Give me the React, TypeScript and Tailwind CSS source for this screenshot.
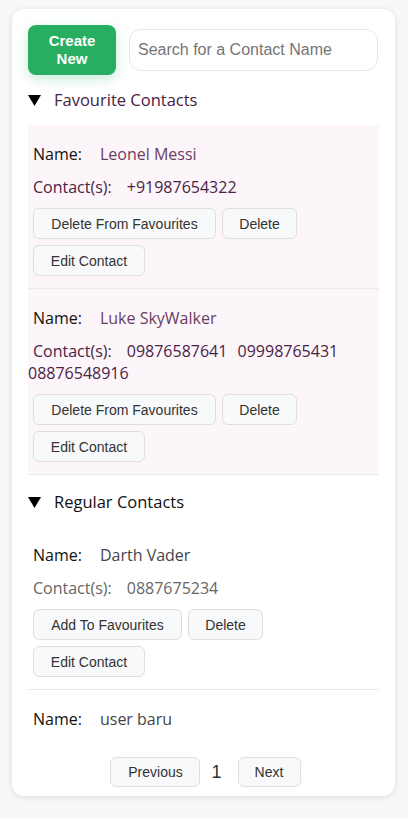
import React from "react";

type Contact = { name: string; numbers: string[] };

const favourites: Contact[] = [
  { name: "Leonel Messi", numbers: ["+91987654322"] },
  { name: "Luke SkyWalker", numbers: ["09876587641", "09998765431", "08876548916"] },
];

const regulars: Contact[] = [
  { name: "Darth Vader", numbers: ["0887675234"] },
  { name: "user baru", numbers: ["0123456789"] },
];

const btn =
  "rounded-md border border-[#dedede] bg-[#f8f9fa] text-[14px] leading-none text-[#333] font-['Liberation_Sans',Arial,sans-serif]";

function Triangle() {
  return (
    <svg width="13" height="11" viewBox="0 0 13 11" className="shrink-0">
      <polygon points="0,0 13,0 6.5,11" fill="#000" />
    </svg>
  );
}

function ContactItem({ c, fav }: { c: Contact; fav: boolean }) {
  return (
    <div
      className={`pt-[18px] pb-[12px] border-b border-[#ece8ea] ${fav ? "bg-[#fcf5f9]" : "bg-white"}`}
    >
      <p className="text-[16px] leading-[22px]">
        <span className="ml-[5px] mr-[18px] text-[#111]">Name:</span>
        <span className={fav ? "text-[#6b3d61]" : "text-[#44444c]"}>{c.name}</span>
      </p>
      <p
        className={`mt-[11px] text-[16px] leading-[22px] ${fav ? "text-[#4a2345]" : "text-[#666]"}`}
      >
        <span className="ml-[5px] mr-[15px]">Contact(s):</span>
        {c.numbers.map((n) => (
          <React.Fragment key={n}>
            <span className="mr-[6px]">{n}</span>{" "}
          </React.Fragment>
        ))}
      </p>
      <div className="mt-[10px] flex flex-wrap gap-[6px] pl-[5px] w-[290px]">
        {fav ? (
          <button className={`${btn} h-[31px] w-[183px]`}>Delete From Favourites</button>
        ) : (
          <button className={`${btn} h-[31px] w-[149px]`}>Add To Favourites</button>
        )}
        <button className={`${btn} h-[31px] w-[75px]`}>Delete</button>
        <button className={`${btn} h-[31px] w-[112px]`}>Edit Contact</button>
      </div>
    </div>
  );
}

export default function App() {
  return (
    <div className="min-h-screen bg-[#f8f8f8] pt-[9px] pl-[12px] font-['Open_Sans',sans-serif]">
      <div className="w-[383px] h-[787px] rounded-xl bg-white shadow-[0_1px_6px_rgba(0,0,0,0.12)] px-[16px] pt-[16px] flex flex-col">
        <div className="flex items-center gap-[13px]">
          <button className="w-[88px] h-[50px] rounded-lg bg-[#27ae60] text-white font-bold text-[15px] leading-[18px] font-['Liberation_Sans',Arial,sans-serif] shadow-[0_4px_12px_rgba(39,174,96,0.25)]">
            Create
            <br />
            New
          </button>
          <input
            className="w-[249px] h-[42px] rounded-xl border border-[#e7e8d8] pl-[8px] text-[16px] font-['Liberation_Sans',Arial,sans-serif] placeholder:text-[#757575] outline-none"
            placeholder="Search for a Contact Name"
          />
        </div>

        <div className="mt-[12px] h-[659px] shrink-0 overflow-hidden">
          <div className="flex items-center gap-[13px] h-[26px]">
            <Triangle />
            <span className="text-[16.5px] text-[#4a2040]">Favourite Contacts</span>
          </div>
          <div className="mt-[12px]">
            {favourites.map((c) => (
              <ContactItem key={c.name} c={c} fav />
            ))}
          </div>

          <div className="mt-[14px] flex items-center gap-[13px] h-[26px]">
            <Triangle />
            <span className="text-[16.5px] text-[#111]">Regular Contacts</span>
          </div>
          <div className="mt-[11px]">
            {regulars.map((c) => (
              <ContactItem key={c.name} c={c} fav={false} />
            ))}
          </div>
        </div>

        <div className="mt-[11px] flex items-center justify-center pl-[4px]">
          <button className={`${btn} h-[30px] w-[90px] shrink-0`}>Previous</button>
          <span className="ml-[11px] mr-[16px] text-[18px] leading-[30px] text-[#333] font-['Liberation_Sans',Arial,sans-serif]">
            1
          </span>
          <button className={`${btn} h-[30px] w-[63px] shrink-0`}>Next</button>
        </div>
      </div>
    </div>
  );
}
